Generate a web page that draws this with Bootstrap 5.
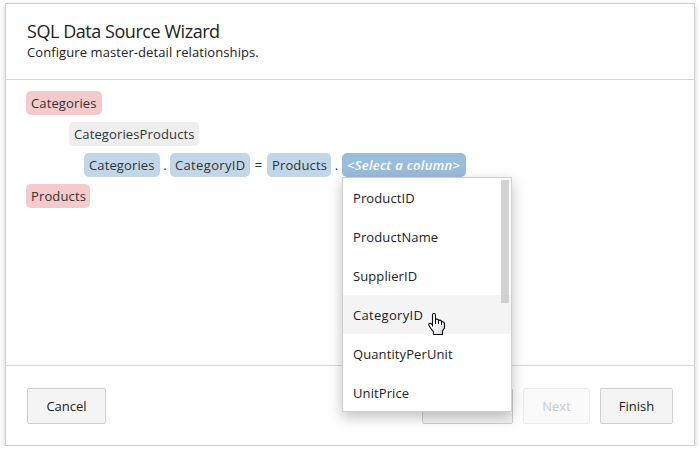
<!DOCTYPE html>
<html lang="en">
<head>
<meta charset="utf-8">
<title>SQL Data Source Wizard</title>
<link href="https://cdn.jsdelivr.net/npm/bootstrap@5.3.0/dist/css/bootstrap.min.css" rel="stylesheet">
<style>
body{font-family:"Open Sans","Noto Sans",sans-serif;font-size:13px;line-height:18px;color:#333;overflow:hidden;background:#fff}
.wizard{width:690px;height:443px;margin:3px 0 0 5px;border:1px solid #d0d0d0;box-shadow:0 2px 6px rgba(0,0,0,.2)}
.wizard-head{height:76px;padding:15px 21px 0;border-bottom:1px solid #d3d3d3;color:#222}
.wizard-title{font-size:18px;line-height:24px;font-weight:400;letter-spacing:-.45px}
.wizard-sub{line-height:18px;letter-spacing:.09px}
.wizard-body{padding:11px 20px 0;gap:7px}
.wizard-foot{height:80px;padding:22px 21px 0;border-top:1px solid #d9d9d9}
.tag{height:24px;line-height:24px;border-radius:5px;padding-left:5px;white-space:nowrap;letter-spacing:.13px}
.tag-query{background:#f5caca}
.tag-relation{background:#eee;width:130px;margin-left:43px}
.tag-field{background:#c2d6ea}
.tag-empty{background:#9bbddc;color:#fff;font-weight:600;font-style:italic;width:124px;letter-spacing:.3px}
.w-cat{width:76px}.w-id{width:80px;letter-spacing:.35px}.w-prod{width:64px}
.cond{margin-left:58px}
.sign{text-align:center;line-height:24px}
.sign-dot{width:10px}.sign-eq{width:17px}.sign-dot-wide{width:11px}
.btn-wiz{--bs-btn-font-size:13px;--bs-btn-padding-x:0;--bs-btn-padding-y:0;--bs-btn-border-radius:2px;--bs-btn-bg:#f4f4f4;--bs-btn-border-color:#d0d0d0;--bs-btn-color:#222;--bs-btn-disabled-bg:#f4f4f4;--bs-btn-disabled-border-color:#d0d0d0;--bs-btn-disabled-color:#777;--bs-btn-disabled-opacity:.4;height:36px;line-height:34px}
.b-cancel{width:79px}.b-prev{width:91px}.b-next{width:67px}.b-finish{width:73px}
.columns-menu{left:342px;top:177px;width:170px;height:235px;background:#fff;border:1px solid #d0d0d0;box-shadow:0 5px 13px rgba(0,0,0,.25)}
.columns-menu .item{height:39px;line-height:41px;padding-left:10px;color:#222;letter-spacing:.1px}
.columns-menu .item.hover{background:#f4f4f4;letter-spacing:.3px}
.thumb{width:8px;height:123px;right:2px;top:2px;background:rgba(191,191,191,.7)}
.hand{left:427px;top:312px}
</style>
</head>
<body>
<div class="wizard d-flex flex-column">
  <header class="wizard-head">
    <h1 class="wizard-title m-0">SQL Data Source Wizard</h1>
    <div class="wizard-sub">Configure master-detail relationships.</div>
  </header>
  <main class="wizard-body flex-grow-1 d-flex flex-column">
    <div class="tag tag-query w-cat">Categories</div>
    <div class="tag tag-relation">CategoriesProducts</div>
    <div class="cond d-flex">
      <div class="tag tag-field w-cat">Categories</div>
      <div class="sign sign-dot">.</div>
      <div class="tag tag-field w-id">CategoryID</div>
      <div class="sign sign-eq">=</div>
      <div class="tag tag-field w-prod">Products</div>
      <div class="sign sign-dot-wide">.</div>
      <div class="tag tag-empty">&lt;Select a column&gt;</div>
    </div>
    <div class="tag tag-query w-prod">Products</div>
  </main>
  <footer class="wizard-foot d-flex">
    <button class="btn btn-wiz b-cancel me-auto">Cancel</button>
    <div class="d-flex" style="gap:10px">
      <button class="btn btn-wiz b-prev">Previous</button>
      <button class="btn btn-wiz b-next" disabled>Next</button>
      <button class="btn btn-wiz b-finish">Finish</button>
    </div>
  </footer>
</div>
<div class="columns-menu position-absolute">
  <div class="item">ProductID</div>
  <div class="item">ProductName</div>
  <div class="item">SupplierID</div>
  <div class="item hover">CategoryID</div>
  <div class="item">QuantityPerUnit</div>
  <div class="item">UnitPrice</div>
  <div class="thumb position-absolute"></div>
</div>
<svg class="hand position-absolute" width="19" height="24" viewBox="0 0 19 24">
  <defs><linearGradient id="g" x1="0" y1="0" x2="1" y2="1"><stop offset=".5" stop-color="#fff"/><stop offset="1" stop-color="#ccc"/></linearGradient></defs>
  <path d="M5.500 14.500V3Q5.500 1.500 7 1.500T8.500 3V7.500Q10 6.500 11.500 8V8.500Q13 7.500 14.500 9V9.500Q17.500 9.500 17.500 12V16L15.500 19V22.500H6.500V20L2.500 14.500Q1 12 2.500 11.500Q4 11 5.500 13" fill="url(#g)" stroke="#0a0a18" stroke-width="1.100"/>
  <path d="M8.500 7.500V12M11.500 8.500V12M14.500 9.500V13" stroke="#0a0a18" stroke-width="1" fill="none"/>
</svg>
<script src="https://cdn.jsdelivr.net/npm/bootstrap@5.3.0/dist/js/bootstrap.bundle.min.js"></script>
</body>
</html>
